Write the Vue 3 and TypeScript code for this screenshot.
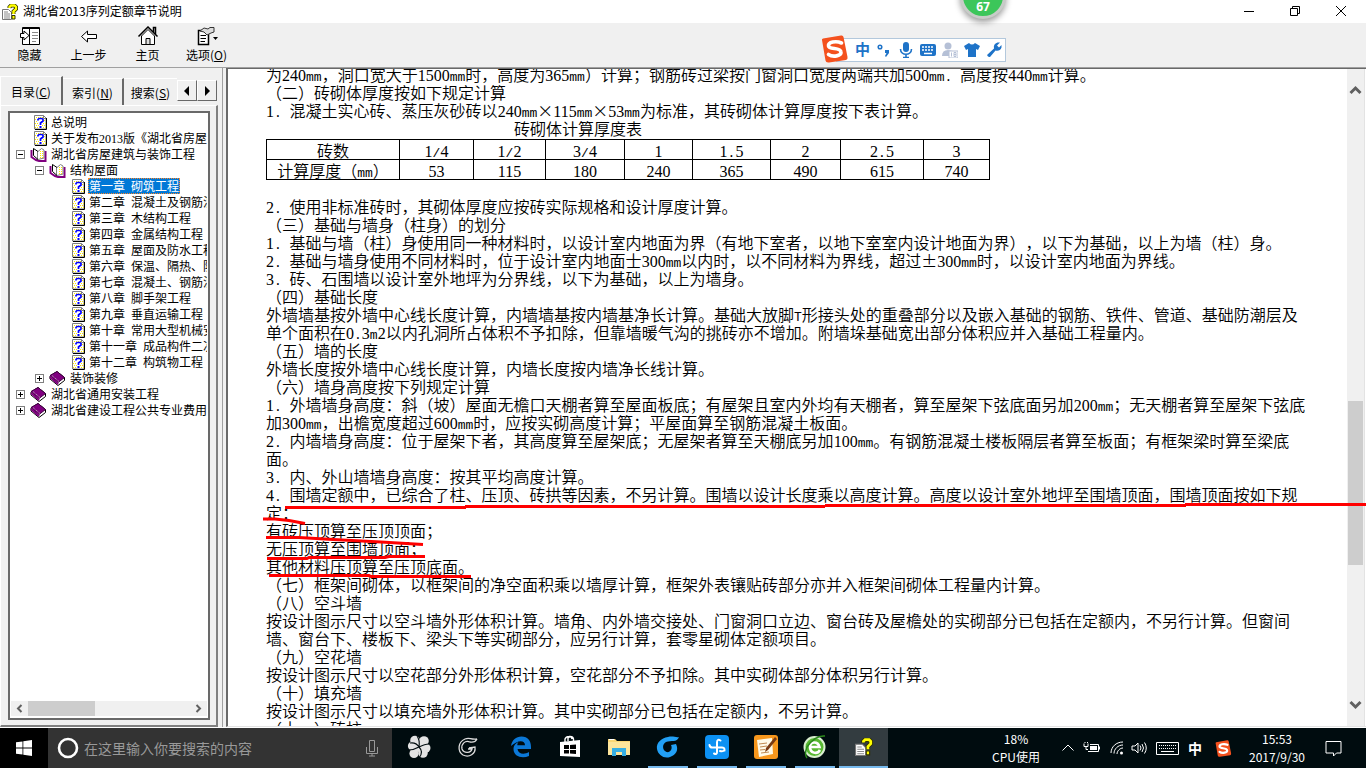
<script setup lang="ts">
import { ref, h, type FunctionalComponent } from 'vue'

/* Half-width characters sit on an 8px grid beside 16px ideographs. */
const Mixed: FunctionalComponent<{ text: string }> = (props) =>
  (props.text.match(/[0-9]+|[A-Za-z. /]+|[^0-9A-Za-z. /]+/g) ?? []).map((run) =>
    /[0-9]/.test(run) ? h('span', { class: 'run-digit' }, run)
      : /[A-Za-z. /]/.test(run) ? h('span', { class: 'run-latin' }, run)
        : run,
  )
Mixed.props = ['text']

interface Node { label: string; level: number; icon: 'page' | 'open' | 'book'; toggle?: '-' | '+' }
const nodes: Node[] = [
  { label: '总说明', level: 0, icon: 'page' },
  { label: '关于发布2013版《湖北省房屋建筑', level: 0, icon: 'page' },
  { label: '湖北省房屋建筑与装饰工程', level: 0, icon: 'open', toggle: '-' },
  { label: '结构屋面', level: 1, icon: 'open', toggle: '-' },
  { label: '第一章 砌筑工程', level: 2, icon: 'page' },
  { label: '第二章 混凝土及钢筋混凝土', level: 2, icon: 'page' },
  { label: '第三章 木结构工程', level: 2, icon: 'page' },
  { label: '第四章 金属结构工程', level: 2, icon: 'page' },
  { label: '第五章 屋面及防水工程', level: 2, icon: 'page' },
  { label: '第六章 保温、隔热、防腐', level: 2, icon: 'page' },
  { label: '第七章 混凝土、钢筋混凝土', level: 2, icon: 'page' },
  { label: '第八章 脚手架工程', level: 2, icon: 'page' },
  { label: '第九章 垂直运输工程', level: 2, icon: 'page' },
  { label: '第十章 常用大型机械安拆', level: 2, icon: 'page' },
  { label: '第十一章 成品构件二次', level: 2, icon: 'page' },
  { label: '第十二章 构筑物工程', level: 2, icon: 'page' },
  { label: '装饰装修', level: 1, icon: 'book', toggle: '+' },
  { label: '湖北省通用安装工程', level: 0, icon: 'book', toggle: '+' },
  { label: '湖北省建设工程公共专业费用', level: 0, icon: 'book', toggle: '+' },
]
const selected = ref(4)

const intro = [
  '为240mm，洞口宽大于1500mm时，高度为365mm）计算；钢筋砖过梁按门窗洞口宽度两端共加500mm. 高度按440mm计算。',
  '（二）砖砌体厚度按如下规定计算',
  '1. 混凝土实心砖、蒸压灰砂砖以240mm×115mm×53mm为标准，其砖砌体计算厚度按下表计算。',
]
const head = ['砖数', '1/4', '1/2', '3/4', '1', '1.5', '2', '2.5', '3']
const thickness = ['计算厚度（mm）', '53', '115', '180', '240', '365', '490', '615', '740']
const lines = [
  '2. 使用非标准砖时，其砌体厚度应按砖实际规格和设计厚度计算。',
  '（三）基础与墙身（柱身）的划分',
  '1. 基础与墙（柱）身使用同一种材料时，以设计室内地面为界（有地下室者，以地下室室内设计地面为界），以下为基础，以上为墙（柱）身。',
  '2. 基础与墙身使用不同材料时，位于设计室内地面士300mm以内时，以不同材料为界线，超过±300mm时，以设计室内地面为界线。',
  '3. 砖、石围墙以设计室外地坪为分界线，以下为基础，以上为墙身。',
  '（四）基础长度',
  '外墙墙基按外墙中心线长度计算，内墙墙基按内墙基净长计算。基础大放脚T形接头处的重叠部分以及嵌入基础的钢筋、铁件、管道、基础防潮层及',
  '单个面积在0.3m2以内孔洞所占体积不予扣除，但靠墙暖气沟的挑砖亦不增加。附墙垛基础宽出部分体积应并入基础工程量内。',
  '（五）墙的长度',
  '外墙长度按外墙中心线长度计算，内墙长度按内墙净长线计算。',
  '（六）墙身高度按下列规定计算',
  '1. 外墙墙身高度：斜（坡）屋面无檐口天棚者算至屋面板底；有屋架且室内外均有天棚者，算至屋架下弦底面另加200mm；无天棚者算至屋架下弦底',
  '加300mm，出檐宽度超过600mm时，应按实砌高度计算；平屋面算至钢筋混凝土板面。',
  '2. 内墙墙身高度：位于屋架下者，其高度算至屋架底；无屋架者算至天棚底另加100mm。有钢筋混凝土楼板隔层者算至板面；有框架梁时算至梁底',
  '面。',
  '3. 内、外山墙墙身高度：按其平均高度计算。',
  '4. 围墙定额中，已综合了柱、压顶、砖拱等因素，不另计算。围墙以设计长度乘以高度计算。高度以设计室外地坪至围墙顶面，围墙顶面按如下规',
  '定：',
  '有砖压顶算至压顶顶面；',
  '无压顶算至围墙顶面；',
  '其他材料压顶算至压顶底面。',
  '（七）框架间砌体，以框架间的净空面积乘以墙厚计算，框架外表镶贴砖部分亦并入框架间砌体工程量内计算。',
  '（八）空斗墙',
  '按设计图示尺寸以空斗墙外形体积计算。墙角、内外墙交接处、门窗洞口立边、窗台砖及屋檐处的实砌部分已包括在定额内，不另行计算。但窗间',
  '墙、窗台下、楼板下、梁头下等实砌部分，应另行计算，套零星砌体定额项目。',
  '（九）空花墙',
  '按设计图示尺寸以空花部分外形体积计算，空花部分不予扣除。其中实砌体部分体积另行计算。',
  '（十）填充墙',
  '按设计图示尺寸以填充墙外形体积计算。其中实砌部分已包括在定额内，不另计算。',
  '（十一）砖柱',
]
</script>

<template>
  <svg class="defs" aria-hidden="true">
    <symbol id="i-page" viewBox="0 0 13 15">
      <path d="M0.5 0.5H9.5L12 3V14H0.5Z" fill="#fff" stroke="#808080" />
      <path d="M2 2.5H9M1 4.5H3M10 5.5H12M2 6.5H4M9 8.5H12M1 8.5H4M2 10.5H5M8 10.5H12M1 12.5H5M9 12.5H12" stroke="#ffe800" stroke-dasharray="1 1" />
      <path d="M9.500 0.500V3.500H12" fill="none" stroke="#808080" />
      <path d="M12.500 3V14.500H1" fill="none" stroke="#000" />
      <path d="M4 5.500V4.500L5 3.500H8L9 4.500V6L6.500 8V10" fill="none" stroke="#00f" stroke-width="1.700" />
      <path d="M5.500 11H7.500V13H5.500Z" fill="#00f" />
    </symbol>
    <symbol id="i-open" viewBox="0 0 17 15">
      <path d="M1.500 3V10L6 13L9 14H15.500V4" fill="#fff" stroke="#800080" stroke-width="2" />
      <path d="M3.500 1.500V8.500L8 12.500V4.500Z" fill="#fff" stroke="#000" />
      <path d="M8 4.500L11.500 1.500L14 3V11L8 12.500" fill="#fff" stroke="#808080" />
      <path d="M10.500 4V11M12.500 4V11" stroke="#ffe800" stroke-dasharray="1 1" />
    </symbol>
    <symbol id="i-book" viewBox="0 0 17 15">
      <path d="M1 5L8 0.500L15.500 6.500V9.500L9 14.500L1 8Z" fill="#fff" stroke="#000" />
      <path d="M1 4.500L8 0.500L15.500 6.500L9 11.500Z" fill="#800080" stroke="#400040" />
      <path d="M1 6L9 13" fill="none" stroke="#800080" stroke-width="2" />
      <path d="M3 4.500L10 10.500" stroke="#c0c0c0" stroke-dasharray="1 1" />
    </symbol>
    <symbol id="i-help" viewBox="0 0 16 16">
      <path d="M0.500 5.500H6.500L9.500 8.500V15.500H0.500Z" fill="#fff" stroke="#777" />
      <path d="M2 8H6M2 10H8M2 12H8M2 14H8" stroke="#888" />
      <path d="M7.500 4V3L9 1.500H12.500L14 3V5L11.500 7.500V10" fill="none" stroke="#333300" stroke-width="4" />
      <path d="M10 11.500H13V15H10Z" fill="#ff0" stroke="#333300" stroke-width="1" />
      <path d="M7.500 4V3L9 1.500H12.500L14 3V5L11.500 7.500V10" fill="none" stroke="#ff0" stroke-width="2.400" />
    </symbol>
    <symbol id="i-sogou" viewBox="0 0 28 28">
      <path d="M1 5Q0.500 4 2 3.500L20 0.500Q22 0 22.500 2L26.500 22Q27 24.500 25 25L8 27.500Q5 28 4.500 25.500Z" fill="#f4511e" />
      <path d="M20.500 8C15 5.500 7 7 7.500 11C8 15 19.500 12 20 17C20.500 21 12 22.500 7.500 19.500" fill="none" stroke="#fff" stroke-width="3.600" stroke-linecap="round" />
    </symbol>
  </svg>

  <div class="screen">
    <header class="titlebar">
      <svg class="app-icon"><use href="#i-help" /></svg>
      <h1>湖北省2013序列定额章节说明</h1>
      <div class="window-buttons">
        <button aria-label="最小化"><svg viewBox="0 0 12 12"><path d="M1 6.500H11" /></svg></button>
        <button aria-label="还原"><svg viewBox="0 0 12 12"><path d="M1.500 3.500H8.500V10.500H1.500ZM3.500 3.500V1.500H10.500V8.500H8.500" /></svg></button>
        <button aria-label="关闭"><svg viewBox="0 0 12 12"><path d="M1 1L11 11M11 1L1 11" /></svg></button>
      </div>
    </header>

    <nav class="toolbar">
      <button>
        <svg viewBox="0 0 22 20">
          <path d="M3.500 1.500H20.500V18.500H3.500Z" fill="#fff" stroke="#000" />
          <path d="M4 2.500H20M10.500 3V18" stroke="#000" />
          <path d="M13 6.500H19M13 9.500H19M13 12.500H19M13 15.500H17" stroke="#888" />
          <path d="M1.500 7.500H5V5L10 9.500L5 14V11.500H1.500Z" fill="#fff" stroke="#000" />
        </svg>
        <span>隐藏</span>
      </button>
      <button>
        <svg viewBox="0 0 22 20"><path d="M3.500 10.500L9.500 5V8.500H18.500V12.500H9.500V16Z" fill="#fff" stroke="#000" /></svg>
        <span>上一步</span>
      </button>
      <button>
        <svg viewBox="0 0 22 20">
          <path d="M4.500 10V18.500H17.500V10L11 3.500Z" fill="#fff" stroke="#000" />
          <path d="M1.500 10.500L11 1L20.500 10.500M16.500 6V1.500H18.500V8" fill="none" stroke="#000" stroke-width="1.500" />
          <path d="M9 12.500H13V18.500H9Z" fill="#ddd" stroke="#000" />
        </svg>
        <span>主页</span>
      </button>
      <button>
        <svg viewBox="0 0 22 20">
          <path d="M2.500 4.500H12.500V18.500H2.500Z" fill="#fff" stroke="#000" stroke-width="1.500" />
          <path d="M4.500 9.500H10M4.500 12.500H10M4.500 15.500H9" stroke="#000" />
          <path d="M4 5L8 2L12 3L14 1.500H18V6L15 7L11 9L8 6Z" fill="#ddd" stroke="#333" />
          <path d="M17 11H22L19.500 14Z" fill="#000" />
        </svg>
        <span>选项(<u>O</u>)</span>
      </button>
    </nav>

    <main class="workspace">
      <aside class="sidebar">
        <div class="tabs" role="tablist">
          <button role="tab" class="tab active" aria-selected="true">目录(<u>C</u>)</button>
          <button role="tab" class="tab">索引(<u>N</u>)</button>
          <button role="tab" class="tab last">搜索(<u>S</u>)</button>
          <button class="spin" aria-label="向左"><svg viewBox="0 0 8 10"><path d="M6 0V10L1 5Z" /></svg></button>
          <button class="spin" aria-label="向右"><svg viewBox="0 0 8 10"><path d="M2 0V10L7 5Z" /></svg></button>
        </div>
        <div class="tab-page">
          <div class="tree-box">
            <ul class="tree" role="tree">
              <li v-for="(n, i) in nodes" :key="n.label" :class="'level-' + n.level" role="treeitem">
                <span class="slot"><button v-if="n.toggle" class="toggle" :class="{ plus: n.toggle === '+' }" aria-label="展开或折叠"></button></span>
                <svg class="node-icon" :class="n.icon"><use :href="'#i-' + n.icon" /></svg>
                <button class="label" :class="{ chosen: selected === i }" @click="selected = i"><Mixed :text="n.label" /></button>
              </li>
            </ul>
            <div class="hscroll">
              <svg viewBox="0 0 17 15"><path d="M10.500 4L7 7.500L10.500 11" /></svg>
              <div class="hthumb"></div>
              <svg class="end" viewBox="0 0 17 15"><path d="M6.500 4L10 7.500L6.500 11" /></svg>
            </div>
          </div>
        </div>
      </aside>
      <div class="splitter"></div>

      <section class="viewer">
        <article class="doc">
          <div class="intro"><p v-for="l in intro" :key="l"><Mixed :text="l" /></p></div>
          <table>
            <caption>砖砌体计算厚度表</caption>
            <colgroup><col v-for="(c, i) in head" :key="c" :class="'c' + i"></colgroup>
            <tbody>
              <tr><td v-for="c in head" :key="c"><Mixed :text="c" /></td></tr>
              <tr><td v-for="c in thickness" :key="c"><Mixed :text="c" /></td></tr>
            </tbody>
          </table>
          <p v-for="l in lines" :key="l"><Mixed :text="l" /></p>
        </article>
        <div class="vscroll">
          <svg viewBox="0 0 17 17"><path d="M3.500 11L8.500 6L13.500 11" /></svg>
          <div class="vtrack"><div class="vthumb"></div></div>
          <svg viewBox="0 0 17 17"><path d="M3.500 6L8.500 11L13.500 6" /></svg>
        </div>
        <svg class="marks" viewBox="0 0 1105 88" aria-hidden="true">
          <path d="M24 11.500H205M204 10.500H564M564 9.500H925M924 8.500H1105" />
          <path d="M2 23H14L28 24.500L44 27.500" />
          <path d="M5 41.500H38L72 43.500L120 46L162 48.500" />
          <path d="M6 62.500H46L48 61.500H124L128 60.500H164" />
          <path d="M8 79.500H108L110 80.500H210" />
        </svg>
      </section>
    </main>

    <footer class="taskbar">
      <button class="start" aria-label="开始">
        <svg viewBox="0 0 16 16"><path d="M0 2.300L6.500 1.400V7.600H0ZM7.300 1.300L16 0V7.600H7.300ZM0 8.400H6.500V14.600L0 13.700ZM7.300 8.400H16V16L7.300 14.700Z" fill="#fff" /></svg>
      </button>
      <label class="search">
        <svg viewBox="0 0 22 22"><circle cx="11" cy="11" r="9" fill="none" stroke="#fff" stroke-width="2.600" /></svg>
        <input type="text" placeholder="在这里输入你要搜索的内容" aria-label="搜索">
        <svg class="mic" viewBox="0 0 14 18"><path d="M4.500 1.500H9.500V12.500H4.500ZM1.500 8V14.500H12.500V8M7 14.500V17M4 17H10" fill="none" stroke="#999" /></svg>
      </label>
      <div class="apps">
        <button aria-label="风车">
          <svg viewBox="0 0 24 24"><g fill="#e4e4e4"><circle cx="8" cy="5.500" r="4.800" /><circle cx="17" cy="6" r="4.800" /><circle cx="19" cy="13" r="4.500" /><circle cx="16" cy="18" r="4.800" /><circle cx="7" cy="18.500" r="4.600" /><circle cx="5.500" cy="11" r="4.600" /><circle cx="12" cy="12" r="5" /></g><path d="M12 12Q13 5 10 1M12 12Q18 9 22 9M12 12Q17 17 12 23M12 12Q7 15 1 15M12 12Q9 7 3 8" fill="none" stroke="#000c0f" stroke-width="1.100" /></svg>
        </button>
        <button aria-label="G">
          <svg viewBox="0 0 24 24"><path d="M21 4C14 5 14 2 9 4C2 7 1 16 7 20C13 23 20 19 19 12L13 13M21 4Q19 8 14 7C9 5 5 9 6 14C8 19 15 18 16 14H12" fill="none" stroke="#ddd" stroke-width="1.300" /></svg>
        </button>
        <button class="pinned" aria-label="Edge">
          <svg viewBox="0 0 24 24"><path d="M2 11C3 5 7 1.500 12.500 1.500C19 1.500 22 6 22 12V14H8.500C9 19 15 20 20 17V21C13 24 4.500 21.500 4.500 14C4.500 10.500 7 8 9.500 7C8.600 8 8.300 9 8.300 10.300H16C16 5 9 4.500 2 11Z" fill="#0b78d7" /></svg>
        </button>
        <button aria-label="应用商店">
          <svg viewBox="0 0 24 24"><path d="M2 7L22 5V22L2 21Z" fill="#fff" /><path d="M7 7V4Q8 1.500 11 1.500Q15 1 15.500 4V6M10 6V3Q13 0 14 4" fill="none" stroke="#fff" stroke-width="1.400" /><path d="M6 10H11V14H6ZM12 10L18 9.500V14H12ZM6 15H11V18.500H6ZM12 15H18V19L12 18.500Z" fill="#000" /></svg>
        </button>
        <button aria-label="文件资源管理器">
          <svg viewBox="0 0 24 24"><path d="M1 4H8L10 6H23V20H1Z" fill="#fbd775" /><path d="M1 7H23V20H1Z" fill="#fde59b" /><path d="M2 4.500H7" stroke="#fff" /><path d="M5 21V13H19V21H15V17H9V21Z" fill="#37aee2" /></svg>
        </button>
        <button class="open" aria-label="浏览器 G">
          <svg viewBox="0 0 24 24"><path d="M23 2C20 3 17 0.500 12 2C5 3 0 8 1 14C2 20 8 24 14 22C20 20 23 15 20 9L15 10C17 14 14 18 10.500 17C6 15 6 9 10 7C15 5 21 8 23 2Z" fill="#22a0f5" /></svg>
        </button>
        <button class="open" aria-label="云盘">
          <svg viewBox="0 0 24 24"><rect width="24" height="24" rx="4" fill="#0c91f3" /><path d="M15.500 5.500Q12 3.500 12 7.500V17Q12 20 9 18.500M4.500 10Q5 13 8 12.500H16Q20 12 19.500 15.500M15 16Q18 17 19.500 15" fill="none" stroke="#fff" stroke-width="2" stroke-linecap="round" /></svg>
        </button>
        <button class="open" aria-label="记事">
          <svg viewBox="0 0 24 24"><rect width="24" height="24" rx="3" fill="#f7981d" /><path d="M3 5L18 3L19 19L5 22Z" fill="#fffbe8" /><path d="M5 9L13 8M6 12L13 11M6 15L11 14.500M7 18L15 17" stroke="#c08a50" /><path d="M21 2L23 4L14 15L11 17L12 13Z" fill="#7a3b12" /></svg>
        </button>
        <button class="open" aria-label="安全浏览器">
          <svg viewBox="0 0 24 24"><circle cx="11.500" cy="12" r="10" fill="#58b832" stroke="#d9efcf" stroke-width="2" /><path d="M17 15C14 20 7 18 7 12C7 6 15 6 16.500 12H8" fill="none" stroke="#fff" stroke-width="2.600" /><path d="M22 1Q12 0 4 12Q1 19 4 23" fill="none" stroke="#2c8a1d" stroke-width="1.500" /></svg>
        </button>
        <button class="open current" aria-label="帮助">
          <svg class="small" viewBox="0 0 16 16"><use href="#i-help" /></svg>
        </button>
      </div>
      <div class="tray">
        <div class="cpu">18%<br>CPU使用</div>
        <svg class="t-chev" viewBox="0 0 14 14"><path d="M1.500 9.500L7 4L12.500 9.500" /></svg>
        <svg class="t-bat" viewBox="0 0 18 14"><path d="M1 2.500V5.500H5V2.500M3 5.500V8.500H5M2 2V1M4.500 2V1M7 3.500H15.500V10.500H5" /><path d="M7 5H14V9H7ZM16 5.500H17V8.500H16Z" class="solid" /></svg>
        <svg class="t-wifi" viewBox="0 0 14 14"><path d="M1 12C1 6 6 1 13 1M4 12.500C4 8 8 4 13 4M7 13C7 10 10 7 13 7" /><circle cx="11.500" cy="12" r="1.500" class="solid" /></svg>
        <svg class="t-vol" viewBox="0 0 17 14"><path d="M1 5H4L7 2V12L4 9H1ZM9 4.500Q11 7 9 9.500M11 3Q14 7 11 11M13.500 1.500Q17 7 13.500 12.500" /></svg>
        <svg class="t-key" viewBox="0 0 23 13"><path d="M0.500 0.500H22.500V12.500H0.500Z" /><path d="M3 3.500H20M3 6.500H20" stroke-dasharray="1 1" /><path d="M5 9.500H18" /></svg>
        <span class="ime">中</span>
        <svg class="t-sogou"><use href="#i-sogou" /></svg>
        <div class="clock">15:53<br>2017/9/30</div>
        <svg class="t-note" viewBox="0 0 17 17"><path d="M1 1.500H16V13H11.500L8.500 16L8.500 13H1Z" /></svg>
      </div>
    </footer>

    <div class="ball">67</div>
    <div class="ime-bar">
      <svg class="ime-logo"><use href="#i-sogou" /></svg>
      <span class="ime-cn">中</span>
      <svg viewBox="0 0 16 16"><circle cx="4" cy="5" r="1.800" fill="none" stroke="#1e73c8" stroke-width="1.500" /><path d="M9 8H13V11L10 15L9 14L10.500 11H9Z" fill="#1e73c8" /></svg>
      <svg viewBox="0 0 16 16"><rect x="5" y="0" width="6" height="10" rx="3" fill="#1e73c8" /><path d="M2.500 7C2.500 14 13.500 14 13.500 7M8 12V15.500M5 15.500H11" fill="none" stroke="#1e73c8" stroke-width="1.600" /></svg>
      <svg viewBox="0 0 16 16"><rect x="0" y="2" width="16" height="12" rx="2" fill="#1e73c8" /><path d="M2 5H14M2 8H14" stroke="#fff" stroke-width="1.500" stroke-dasharray="2 1" /><path d="M4 11.500H12" stroke="#fff" stroke-width="1.500" /></svg>
      <svg viewBox="0 0 16 16"><circle cx="6" cy="4" r="3.500" fill="#b5c0d6" /><path d="M0 14Q0 8 6 8L11 9V14Z" fill="#b5c0d6" /><rect x="7" y="9" width="9" height="7" fill="#fff" stroke="#b5c0d6" /><path d="M9.500 10.500V14.500M12 10.500H14V14.500H12ZM12 12.500H14" fill="none" stroke="#b5c0d6" /></svg>
      <svg viewBox="0 0 16 16"><path d="M5 1Q8 4 11 1L16 4L14 8L12 7V15H4V7L2 8L0 4Z" fill="#1e73c8" /></svg>
      <svg viewBox="0 0 16 16"><path d="M1 13L8 6.500Q7 2 11.500 0.500L14 0.500L11 3.500L13 5.500L15.500 3V5.500Q14 9.500 9.500 8.500L4 15Q2 15.500 1 13Z" fill="#1e73c8" /></svg>
    </div>
  </div>
</template>

<style>
body { margin: 0; overflow: hidden; }
.run-digit { font-family: "Liberation Serif", serif; line-height: 0; }
.run-latin { font-family: "Liberation Mono", monospace; font-size: 13px; line-height: 0; white-space: pre; }
.tree .run-latin { font-size: 10px; }
</style>

<style scoped>
button { font: inherit; color: inherit; background: none; border: 0; padding: 0; margin: 0; }
svg { display: block; flex: none; }
.defs { position: absolute; width: 0; height: 0; }
.screen {
  position: relative; display: flex; flex-direction: column; height: 100vh; overflow: hidden;
  background: #f0f0f0; color: #000; font: 12px "Noto Sans CJK SC", sans-serif;
}
.titlebar { display: flex; align-items: center; height: 23px; background: #fff; flex: none; }
.app-icon { width: 16px; height: 16px; margin-left: 2px; }
h1 { font-size: 12px; font-weight: 400; line-height: 20px; margin: 0 auto 2px 5px; }
.window-buttons { display: flex; padding-right: 2px; margin-bottom: 2px; }
.window-buttons button { width: 46px; height: 20px; display: flex; align-items: center; justify-content: center; }
.window-buttons svg { width: 12px; height: 12px; fill: none; stroke: #000; }
.toolbar { display: flex; height: 44px; flex: none; border-bottom: 1px solid #a0a0a0; }
.toolbar button { width: 59px; display: flex; flex-direction: column; align-items: center; padding-top: 3px; }
.toolbar svg { width: 22px; height: 20px; }
.toolbar span { line-height: 18px; }

.workspace { display: flex; flex: 1; min-height: 0; border-bottom: 1px solid #fff; }
.sidebar { width: 218px; flex: none; display: flex; flex-direction: column; padding-top: 8px; box-sizing: border-box; }
.tabs { display: flex; height: 29px; flex: none; align-items: flex-end; }
.tab { height: 27px; line-height: 25px; width: 61px; border-right: 2px solid #696969; border-top: 1px solid #fff; box-sizing: border-box; overflow: hidden; white-space: nowrap; }
.tab.active { height: 29px; width: 63px; border-left: 1px solid #fff; }
.tab.last { width: 53px; border-right: 0; }
.spin { width: 20px; height: 21px; align-self: center; border: 1px solid; border-color: #fff #696969 #696969 #fff; display: flex; align-items: center; justify-content: center; }
.spin svg { width: 8px; height: 10px; }
.tab-page { flex: 1; min-height: 0; display: flex; padding: 5px 6px 5px 7px; border: 1px solid #fff; border-right: 2px solid #808080; border-bottom: 2px solid #808080; }
.tree-box { flex: 1; min-width: 0; display: flex; flex-direction: column; background: #fff; border: 2px solid #696969; padding: 1px 1px 2px; }
.tree { list-style: none; margin: 0; padding: 0; flex: 1; overflow: hidden; }
.tree li { display: flex; align-items: center; height: 16px; white-space: nowrap; }
.level-1 { padding-left: 19px; }
.level-2 { padding-left: 38px; }
.slot { width: 19px; display: flex; justify-content: center; flex: none; }
.toggle { width: 9px; height: 9px; border: 1px solid #808080; background: linear-gradient(#000, #000) center / 5px 1px no-repeat; }
.toggle.plus { background: linear-gradient(#000, #000) center / 5px 1px no-repeat, linear-gradient(#000, #000) center / 1px 5px no-repeat; }
.node-icon { width: 17px; height: 15px; margin-right: 3px; }
.node-icon.page { width: 13px; margin: 0 3px 0 4px; }
.label { height: 16px; line-height: 16px; padding: 0 1px; text-align: left; }
.label.chosen { background: #0078d7; color: #fff; outline: 1px dotted #ff8728; outline-offset: -1px; }
.hscroll { display: flex; height: 15px; background: #f0f0f0; }
.hscroll svg, .vscroll svg { fill: none; stroke: #606060; stroke-width: 2; }
.hscroll svg { width: 17px; height: 15px; }
.hscroll .end { margin-left: auto; }
.hthumb { width: 67px; background: #cdcdcd; }
.splitter { width: 8px; flex: none; box-sizing: border-box; border-left: 4px solid #f0f0f0; box-shadow: inset 1px 0 #a0a0a0; }

.viewer { position: relative; flex: 1; min-width: 0; display: flex; background: #fff; border-left: 2px solid #696969; border-top: 1px solid #696969; border-bottom: 1px solid #e3e3e3; }
.doc { flex: 1; min-width: 0; overflow: hidden; padding-left: 38px; font-size: 16px; line-height: 18px; font-weight: 350; text-spacing-trim: space-all; white-space: nowrap; }
.doc p { margin: 0; }
.intro { margin-top: -4px; }
table { border-collapse: collapse; table-layout: fixed; width: 724px; margin-bottom: 17px; }
caption { line-height: 18px; padding: 0 100px 2px 0; }
td { border: 1px solid #000; padding: 0; height: 19px; line-height: 18px; text-align: center; }
.c0 { width: 133px; } .c1 { width: 74px; } .c2 { width: 72px; } .c3 { width: 79px; } .c4 { width: 68px; }
.c5 { width: 78px; } .c6 { width: 70px; } .c7 { width: 83px; } .c8 { width: 66px; }
.marks { position: absolute; left: 33px; top: 427px; width: 1105px; height: 88px; fill: none; stroke: #f00; stroke-width: 3; }
.vscroll { width: 17px; flex: none; border-right: 1px solid #e3e3e3; margin-right: 1px; background: #f0f0f0; display: flex; flex-direction: column; padding: 13px 0; }
.vscroll svg { width: 17px; height: 17px; stroke-width: 3; }
.vtrack { flex: 1; display: flex; flex-direction: column; padding: 302px 1px 0; }
.vthumb { height: 164px; background: #cdcdcd; }

.taskbar { height: 40px; flex: none; display: flex; background: #000c0f; color: #fff; }
.start { width: 48px; background: #000; display: flex; align-items: center; justify-content: center; }
.start svg { width: 16px; height: 16px; }
.search { width: 344px; box-sizing: border-box; padding: 0 13px 0 9px; background: #333; display: flex; align-items: center; }
.search svg { width: 22px; height: 22px; }
.search .mic { width: 14px; height: 18px; }
.search input { flex: 1; min-width: 0; border: 0; background: none; color: #fff; font: inherit; font-size: 14px; padding: 0 0 0 5px; outline: 0; }
.search input::placeholder { color: #999; opacity: 1; }
.apps { display: flex; padding-left: 2px; }
.apps button { width: 49px; display: flex; align-items: center; justify-content: center; border-bottom: 2px solid transparent; box-sizing: border-box; }
.apps .pinned { margin-left: 4px; }
.apps svg { width: 24px; height: 24px; }
.apps .small { width: 18px; height: 20px; }
.apps .open { background: linear-gradient(#76b9ed, #76b9ed) center bottom / 40px 2px no-repeat border-box; }
.apps .current { background: linear-gradient(#76b9ed, #76b9ed) center bottom / 100% 2px no-repeat border-box, #333c40; }
.tray { margin-left: auto; display: flex; align-items: center; padding-right: 24px; }
.tray svg { fill: none; stroke: #fff; }
.tray .solid { fill: #fff; stroke: none; }
.cpu, .clock { text-align: center; line-height: 18px; }
.cpu { width: 50px; margin-right: 20px; }
.clock { width: 66px; margin: 0 15px 0 12px; }
.t-chev { width: 14px; height: 14px; margin-right: 8px; }
.t-bat { width: 18px; height: 14px; margin-right: 9px; }
.t-wifi { width: 14px; height: 14px; margin-right: 7px; }
.t-vol { width: 17px; height: 14px; margin-right: 8px; }
.t-key { width: 23px; height: 13px; margin-right: 9px; }
.ime { font-size: 14px; line-height: 18px; width: 14px; margin-right: 13px; font-weight: 700; }
.tray .t-sogou { width: 17px; height: 17px; stroke: none; }
.t-sogou, .ime-logo { overflow: visible; }
.t-note { width: 17px; height: 17px; }

.ball {
  position: absolute; left: 960px; top: -27px; width: 40px; height: 40px; border: 3px solid #c8ccc8; border-radius: 50%;
  background: #3cc65a; color: #fff; font: bold 12px/62px "Open Sans", sans-serif; text-align: center; box-shadow: 0 3px 6px #0006;
}
.ime-bar {
  position: absolute; left: 836px; top: 38px; height: 24px; width: 170px; box-sizing: border-box; padding-left: 18px;
  border: 1px solid #b3c8dc; background: #fff; display: flex; align-items: center; gap: 6px; color: #1e73c8;
}
.ime-bar svg { width: 16px; height: 16px; }
.ime-bar .ime-logo { position: absolute; left: -16px; top: -4px; width: 28px; height: 28px; }
.ime-cn { font-size: 15px; font-weight: 700; line-height: 20px; padding-bottom: 2px; }
</style>
